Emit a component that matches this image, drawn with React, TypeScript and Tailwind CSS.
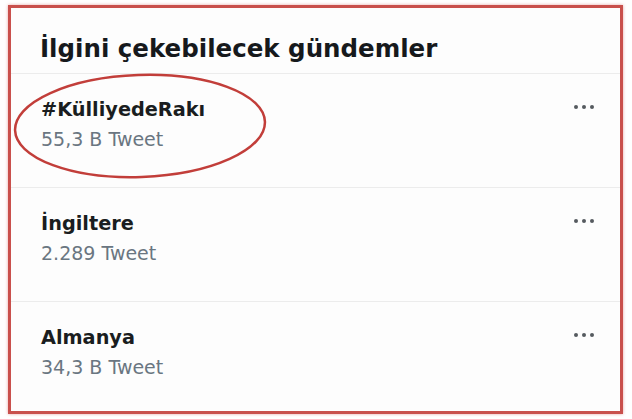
const trends = [
  { name: '#KülliyedeRakı', count: '55,3 B Tweet' },
  { name: 'İngiltere', count: '2.289 Tweet' },
  { name: 'Almanya', count: '34,3 B Tweet' },
];

const MoreDots = () => (
  <div className="mt-[5px] flex items-center gap-[4px]">
    <span className="h-[4px] w-[4px] rounded-full bg-[#555a5f]" />
    <span className="h-[4px] w-[4px] rounded-full bg-[#555a5f]" />
    <span className="h-[4px] w-[4px] rounded-full bg-[#555a5f]" />
  </div>
);

export default function App() {
  return (
    <div className="h-[419px] w-[632px] bg-white pl-[8px] pt-[5px] font-['DejaVu_Sans',sans-serif]">
      <div className="relative h-[409px] w-[615px] border-[3px] border-[#c9504c] bg-[#fdfdfd] shadow-[0_0_3px_rgba(210,90,90,0.55)]">
        <div className="h-[66px] border-b border-[#ececec] pl-[29px] pt-[29px]">
          <h2 className="text-[24.5px] font-bold leading-none text-[#16191c]">İlgini çekebilecek gündemler</h2>
        </div>

        {trends.map((t, i) => (
          <div
            key={t.name}
            className={
              i < trends.length - 1
                ? 'flex h-[114px] items-start justify-between border-b border-[#ececec] pl-[30px] pr-[26px] pt-[26px]'
                : 'flex h-[109px] items-start justify-between pl-[30px] pr-[26px] pt-[26px]'
            }
          >
            <div className="flex flex-col">
              <span className="text-[19.3px] font-bold leading-none text-[#1a1d20]">{t.name}</span>
              <span className="mt-[11px] text-[19px] leading-none text-[#6a7681]">{t.count}</span>
            </div>
            <MoreDots />
          </div>
        ))}

        {/* hand drawn circle around the first trend */}
        <svg className="pointer-events-none absolute left-0 top-0" width="609" height="403" viewBox="0 0 609 403">
          <ellipse
            cx="129"
            cy="118"
            rx="125"
            ry="51"
            transform="rotate(-2 129 118)"
            fill="none"
            stroke="#c23e3a"
            strokeWidth="2.5"
          />
        </svg>
      </div>
    </div>
  );
}
